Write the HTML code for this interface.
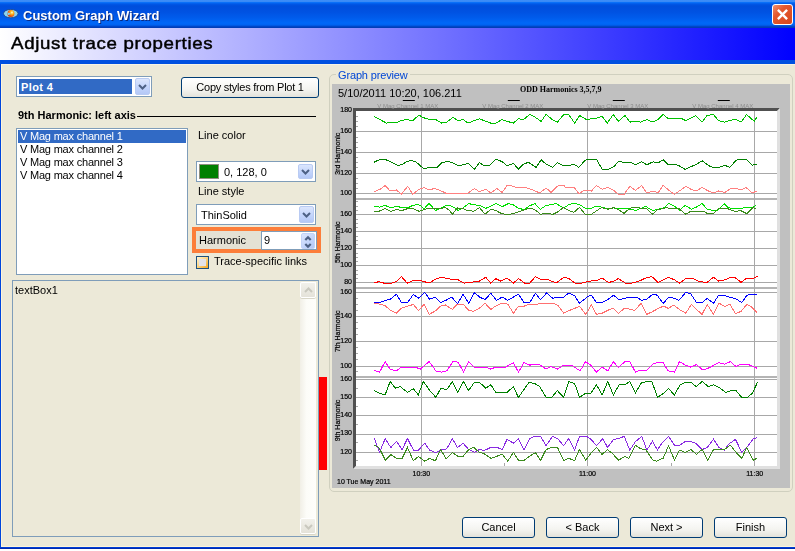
<!DOCTYPE html>
<html><head><meta charset="utf-8"><style>
html,body{margin:0;padding:0;width:795px;height:551px;overflow:hidden;background:#fff}
*{box-sizing:border-box}
.a{position:absolute}
body{font-family:"Liberation Sans",sans-serif;font-size:11px;color:#000;position:relative}
.lbl,.btn,svg{will-change:transform}
.btn{position:absolute;border:1px solid #003C74;border-radius:3px;background:linear-gradient(#FFFFFF,#F4F4F0 60%,#E3E2DA);text-align:center;line-height:19px;font-size:11px;}
.cmb{position:absolute;border:1px solid #7F9DB9;background:#fff}
.dd{position:absolute;width:15px;border:1px solid #B9CBF3;border-radius:2px;background:linear-gradient(#DCE6FD,#C1D3FB 60%,#B4C8F6)}
.dd svg{position:absolute;left:2px;top:5px}
.lbl{position:absolute;white-space:nowrap;font-size:11px;line-height:13px}
</style></head><body>
<!-- window background -->
<div class="a" style="left:0;top:0;width:795px;height:549px;background:#ECE9D8"></div>
<!-- left border -->
<div class="a" style="left:0;top:0;width:1px;height:549px;background:#0046DC"></div>
<div class="a" style="left:1px;top:64px;width:1px;height:483px;background:#FEF5DA"></div>
<!-- bottom border -->
<div class="a" style="left:1px;top:546px;width:794px;height:1px;background:#FEF5DA"></div>
<div class="a" style="left:0;top:547px;width:795px;height:2px;background:linear-gradient(#0048E8,#00209C)"></div>

<!-- title bar -->
<div class="a" style="left:0;top:0;width:795px;height:28px;background:linear-gradient(#3D8EF8 0px,#3A8AF6 1.5px,#0A70F8 2.5px,#0058E8 4px,#004EDC 6px,#0052E2 12px,#005CEC 18px,#0068F8 23px,#0062F0 25px,#0046C8 26.5px,#003AB0 28px)"></div>
<svg class="a" style="left:3px;top:9px" width="16" height="10" viewBox="0 0 16 10">
 <defs><radialGradient id="ball" cx="0.65" cy="0.35" r="0.7"><stop offset="0" stop-color="#FFFFF0"/><stop offset="0.3" stop-color="#FFC020"/><stop offset="0.7" stop-color="#F06010"/><stop offset="1" stop-color="#D03008"/></radialGradient></defs>
 <ellipse cx="7.8" cy="4.6" rx="7.3" ry="4.2" fill="#8ED4F0" stroke="#204A8C" stroke-width="0.9"/>
 <circle cx="7.9" cy="4.6" r="3.5" fill="url(#ball)"/>
 <path d="M4.2 3.2L8 4.8L5 6.2Z" fill="#7FD8F0"/>
</svg>
<div class="lbl" style="left:23px;top:8px;font-weight:bold;font-size:13px;line-height:16px;color:#fff;text-shadow:1px 1px 0 #0A2A80">Custom Graph Wizard</div>
<div class="a" style="left:772px;top:4px;width:21px;height:21px;border:1px solid #fff;border-radius:3px;background:linear-gradient(135deg,#F29070 0%,#E4582E 35%,#D8461C 100%)">
 <svg class="a" style="left:4px;top:4px" width="11" height="11" viewBox="0 0 11 11"><path d="M0.9 0.9L10.1 10.1M10.1 0.9L0.9 10.1" stroke="#fff" stroke-width="2.4"/></svg>
</div>

<!-- header band -->
<div class="a" style="left:0;top:28px;width:795px;height:32px;background:linear-gradient(90deg,#FFFFFF,#0000FF)"></div>
<div class="a" style="left:0;top:60px;width:795px;height:4px;background:#0050E0"></div>
<div class="a" style="left:1px;top:64px;width:794px;height:1px;background:#F8F4E4"></div>
<div class="lbl" style="left:11px;top:34px;font-size:17px;line-height:20px;letter-spacing:0.6px;transform:scaleX(1.1);transform-origin:0 0;-webkit-text-stroke:0.45px #000">Adjust trace properties</div>

<!-- Plot combo -->
<div class="cmb" style="left:16px;top:76px;width:136px;height:21px;">
  <div class="a" style="left:2px;top:2px;width:113px;height:15px;background:#316AC5;color:#fff;font-weight:bold;font-size:11px;line-height:17px;padding-left:2px;letter-spacing:0.4px">Plot 4</div>
  <div class="dd" style="left:118px;top:1px;height:17px"><svg width="9" height="7" viewBox="0 0 9 7" style="top:5px"><path d="M1 1L4.5 4.5L8 1" stroke="#4D6185" stroke-width="2" fill="none"/></svg></div>
</div>
<div class="btn" style="left:181px;top:77px;width:138px;height:21px;letter-spacing:-0.25px">Copy styles from Plot 1</div>

<div class="lbl" style="left:18px;top:109px;font-weight:bold">9th Harmonic: left axis</div>
<div class="a" style="left:137px;top:116px;width:179px;height:1px;background:#000"></div>

<!-- listbox -->
<div class="cmb" style="left:16px;top:128px;width:172px;height:147px;">
  <div class="a" style="left:1px;top:1px;width:168px;height:13px;background:#316AC5"></div>
  <div class="lbl" style="left:3px;top:1px;color:#fff;letter-spacing:-0.2px">V Mag max channel 1</div>
  <div class="lbl" style="left:3px;top:14px;letter-spacing:-0.2px">V Mag max channel 2</div>
  <div class="lbl" style="left:3px;top:27px;letter-spacing:-0.2px">V Mag max channel 3</div>
  <div class="lbl" style="left:3px;top:40px;letter-spacing:-0.2px">V Mag max channel 4</div>
</div>

<div class="lbl" style="left:198px;top:129px">Line color</div>
<div class="cmb" style="left:196px;top:161px;width:120px;height:21px;">
  <div class="a" style="left:2px;top:2px;width:20px;height:15px;border:1px solid #8F8F80;background:#008000"></div>
  <div class="lbl" style="left:27px;top:4px">0, 128, 0</div>
  <div class="dd" style="left:101px;top:2px;height:15px"><svg width="9" height="7" viewBox="0 0 9 7" style="top:4px"><path d="M1 1L4.5 4.5L8 1" stroke="#4D6185" stroke-width="2" fill="none"/></svg></div>
</div>
<div class="lbl" style="left:198px;top:185px">Line style</div>
<div class="cmb" style="left:196px;top:204px;width:120px;height:21px;">
  <div class="lbl" style="left:4px;top:4px">ThinSolid</div>
  <div class="dd" style="left:102px;top:1px;height:17px"><svg width="9" height="7" viewBox="0 0 9 7" style="top:5px"><path d="M1 1L4.5 4.5L8 1" stroke="#4D6185" stroke-width="2" fill="none"/></svg></div>
</div>
<!-- harmonic -->
<div class="a" style="left:192px;top:227px;width:129px;height:26px;border:4px solid #FC7E3A;background:#E4E1D4"></div>
<div class="lbl" style="left:199px;top:234px">Harmonic</div>
<div class="cmb" style="left:261px;top:231px;width:56px;height:19px;">
  <div class="lbl" style="left:2px;top:2px">9</div>
  <div class="a" style="left:39px;top:1px;width:14px;height:16px;border:1px solid #C3D3F8;border-radius:2px;background:linear-gradient(135deg,#DCE6FD,#C1D3FB 60%,#B4C8F6)">
   <svg class="a" style="left:1px;top:1px" width="10" height="14" viewBox="0 0 10 14"><path d="M2.3 5L5 2.3L7.7 5M2.3 9L5 11.7L7.7 9" stroke="#4D6185" stroke-width="2.2" fill="none"/></svg>
  </div>
</div>
<div class="a" style="left:196px;top:256px;width:13px;height:13px;border:1px solid #1C5180;background:linear-gradient(135deg,#FFF6D8,#FCD88A 45%,#F5A41E)"><div class="a" style="left:2px;top:2px;width:7px;height:7px;background:#E3E3EA"></div></div>
<div class="lbl" style="left:214px;top:255px">Trace-specific links</div>

<!-- textbox -->
<div class="a" style="left:12px;top:280px;width:307px;height:257px;border:1px solid #7F9DB9;background:#ECE9D8"></div>
<div class="lbl" style="left:15px;top:284px">textBox1</div>
<div class="a" style="left:300px;top:282px;width:16px;height:252px;background:linear-gradient(90deg,#F1EFE6,#FCFCF8 40%,#FEFEFB)"></div>
<div class="a" style="left:300px;top:282px;width:16px;height:16px;border:1px solid #FFFFFF;border-radius:2px;background:linear-gradient(#F2F1EB,#E4E2D9);box-shadow:0 1px 0 #D8D6C8"><svg class="a" style="left:3px;top:4px" width="9" height="6" viewBox="0 0 9 6"><path d="M1 5L4.5 1.5L8 5" stroke="#C9C8BE" stroke-width="2" fill="none"/></svg></div>
<div class="a" style="left:300px;top:518px;width:16px;height:16px;border:1px solid #FFFFFF;border-radius:2px;background:linear-gradient(#F2F1EB,#E4E2D9);box-shadow:0 1px 0 #D8D6C8"><svg class="a" style="left:3px;top:5px" width="9" height="6" viewBox="0 0 9 6"><path d="M1 1L4.5 4.5L8 1" stroke="#C9C8BE" stroke-width="2" fill="none"/></svg></div>
<div class="red a" style="left:319px;top:377px;width:8px;height:93px;background:#FF0000"></div>

<!-- group box -->
<div class="a" style="left:329px;top:74px;width:464px;height:418px;border:1px solid #D0D0BF;border-radius:5px"></div>
<div class="lbl" style="left:336px;top:69px;background:#ECE9D8;color:#0046D5;padding:0 2px;letter-spacing:-0.15px">Graph preview</div>
<svg class="a" style="left:0;top:0" width="795" height="551" viewBox="0 0 795 551">
<rect x="332" y="84" width="458" height="404" fill="#C0C0C0"/>
<polygon points="353,108 780,108 777,111 356,111 356,466 353,469" fill="#505050"/>
<polygon points="780,108 780,469 353,469 356,466 777,466 777,111" fill="#E0E0E0"/>
<rect x="356" y="111" width="421" height="355" fill="#FFFFFF"/>
<rect x="356" y="131" width="421" height="1" fill="#A8A8A8"/>
<rect x="356" y="152" width="421" height="1" fill="#A8A8A8"/>
<rect x="356" y="173" width="421" height="1" fill="#A8A8A8"/>
<rect x="356" y="193" width="421" height="1" fill="#A8A8A8"/>
<rect x="356" y="116" width="2" height="1" fill="#A8A8A8"/>
<rect x="356" y="121" width="2" height="1" fill="#A8A8A8"/>
<rect x="356" y="126" width="2" height="1" fill="#A8A8A8"/>
<rect x="356" y="137" width="2" height="1" fill="#A8A8A8"/>
<rect x="356" y="142" width="2" height="1" fill="#A8A8A8"/>
<rect x="356" y="147" width="2" height="1" fill="#A8A8A8"/>
<rect x="356" y="157" width="2" height="1" fill="#A8A8A8"/>
<rect x="356" y="162" width="2" height="1" fill="#A8A8A8"/>
<rect x="356" y="167" width="2" height="1" fill="#A8A8A8"/>
<rect x="356" y="178" width="2" height="1" fill="#A8A8A8"/>
<rect x="356" y="183" width="2" height="1" fill="#A8A8A8"/>
<rect x="356" y="188" width="2" height="1" fill="#A8A8A8"/>
<rect x="356" y="214" width="421" height="1" fill="#A8A8A8"/>
<rect x="356" y="231" width="421" height="1" fill="#A8A8A8"/>
<rect x="356" y="248" width="421" height="1" fill="#A8A8A8"/>
<rect x="356" y="265" width="421" height="1" fill="#A8A8A8"/>
<rect x="356" y="282" width="421" height="1" fill="#A8A8A8"/>
<rect x="356" y="201" width="2" height="1" fill="#A8A8A8"/>
<rect x="356" y="206" width="2" height="1" fill="#A8A8A8"/>
<rect x="356" y="210" width="2" height="1" fill="#A8A8A8"/>
<rect x="356" y="219" width="2" height="1" fill="#A8A8A8"/>
<rect x="356" y="223" width="2" height="1" fill="#A8A8A8"/>
<rect x="356" y="227" width="2" height="1" fill="#A8A8A8"/>
<rect x="356" y="236" width="2" height="1" fill="#A8A8A8"/>
<rect x="356" y="240" width="2" height="1" fill="#A8A8A8"/>
<rect x="356" y="244" width="2" height="1" fill="#A8A8A8"/>
<rect x="356" y="253" width="2" height="1" fill="#A8A8A8"/>
<rect x="356" y="257" width="2" height="1" fill="#A8A8A8"/>
<rect x="356" y="261" width="2" height="1" fill="#A8A8A8"/>
<rect x="356" y="270" width="2" height="1" fill="#A8A8A8"/>
<rect x="356" y="274" width="2" height="1" fill="#A8A8A8"/>
<rect x="356" y="278" width="2" height="1" fill="#A8A8A8"/>
<rect x="356" y="287" width="2" height="1" fill="#A8A8A8"/>
<rect x="356" y="292" width="421" height="1" fill="#A8A8A8"/>
<rect x="356" y="316" width="421" height="1" fill="#A8A8A8"/>
<rect x="356" y="341" width="421" height="1" fill="#A8A8A8"/>
<rect x="356" y="366" width="421" height="1" fill="#A8A8A8"/>
<rect x="356" y="298" width="2" height="1" fill="#A8A8A8"/>
<rect x="356" y="304" width="2" height="1" fill="#A8A8A8"/>
<rect x="356" y="310" width="2" height="1" fill="#A8A8A8"/>
<rect x="356" y="322" width="2" height="1" fill="#A8A8A8"/>
<rect x="356" y="328" width="2" height="1" fill="#A8A8A8"/>
<rect x="356" y="334" width="2" height="1" fill="#A8A8A8"/>
<rect x="356" y="347" width="2" height="1" fill="#A8A8A8"/>
<rect x="356" y="353" width="2" height="1" fill="#A8A8A8"/>
<rect x="356" y="359" width="2" height="1" fill="#A8A8A8"/>
<rect x="356" y="371" width="2" height="1" fill="#A8A8A8"/>
<rect x="356" y="379" width="421" height="1" fill="#A8A8A8"/>
<rect x="356" y="397" width="421" height="1" fill="#A8A8A8"/>
<rect x="356" y="415" width="421" height="1" fill="#A8A8A8"/>
<rect x="356" y="434" width="421" height="1" fill="#A8A8A8"/>
<rect x="356" y="452" width="421" height="1" fill="#A8A8A8"/>
<rect x="356" y="388" width="2" height="1" fill="#A8A8A8"/>
<rect x="356" y="406" width="2" height="1" fill="#A8A8A8"/>
<rect x="356" y="424" width="2" height="1" fill="#A8A8A8"/>
<rect x="356" y="442" width="2" height="1" fill="#A8A8A8"/>
<rect x="356" y="460" width="2" height="1" fill="#A8A8A8"/>
<rect x="356" y="198" width="421" height="2" fill="#B4B4B4"/>
<rect x="356" y="287" width="421" height="2" fill="#B4B4B4"/>
<rect x="356" y="376" width="421" height="2" fill="#B4B4B4"/>
<rect x="421" y="111" width="1" height="355" fill="#A8A8A8"/>
<rect x="587" y="111" width="1" height="355" fill="#A8A8A8"/>
<rect x="754" y="111" width="1" height="355" fill="#A8A8A8"/>
<rect x="504" y="463" width="1" height="3" fill="#A8A8A8"/>
<rect x="671" y="463" width="1" height="3" fill="#A8A8A8"/>
<polyline points="373.8,116.3 380.1,119.6 386.4,123.1 390.1,122.1 397.7,122.1 401.4,120.6 406.5,119.6 412.8,120.6 419.1,115 422.8,117.5 429.1,119.3 435.4,119.3 441.7,123.1 446.7,122.1 453,117.5 458.1,120.6 463.1,119.6 468.1,123.1 474.4,120.6 479.4,118.8 485.7,121.3 490.8,123.1 495.8,123.1 502.1,119.6 507.1,121.3 513.4,123.1 518.4,118.8 523.5,119.6 529.7,114.5 534.8,117 541.1,121.3 546.1,114.5 552.4,119.6 557.4,122.1 563.7,114.5 568.7,114.5 574.6,123.1 579.6,115.5 586.4,119.6 591.4,118.8 596.4,118.1 602.2,116.3 607.3,123.1 613.3,114.5 618.3,121.3 624.9,115.5 629.9,122.1 634.9,121.3 640.5,122.1 646.8,119.6 653.1,122.1 658.1,119.6 663.1,114.5 668.6,118.8 675.7,118.1 680.7,118.1 685.8,120.6 690.8,118.1 695.8,115.5 702.1,122.1 707.1,115.5 713.4,114.5 718.5,120.6 724.7,122.1 731,120.1 736.1,119.6 741.1,122.1 746.6,114.5 754.2,121.3 756.7,117.5" fill="none" stroke="#00C000" stroke-width="1" shape-rendering="crispEdges"/>
<polyline points="373.8,162.3 380.1,159.3 385.1,159.3 391.4,162.3 397.7,165.3 401.4,164.8 406.5,161.8 411.5,160.3 416.5,162.3 424.1,169.1 429.1,167.4 434.2,167.4 436.7,167.9 441.7,162.8 446.7,161.6 451.8,162.3 458.1,165.8 463.1,164.8 468.1,163.3 474.4,169.1 479.4,162.8 484.5,165.8 489.5,165.8 495.8,159.3 502.1,161.6 507.1,165.8 513.4,163.3 518.4,169.1 523.5,164.1 528.5,162.3 536,167.4 541.1,159.8 546.1,164.1 552.4,167.4 557.4,162.8 563.7,165.8 565,165.8 568.8,165.8 573.8,164.1 578.8,167.4 585.1,160.3 588.9,159.3 596.4,159.3 602.2,169.4 607.8,169.4 614.1,166.6 618.3,161.6 624.1,162.3 630.4,162.3 635.4,164.8 641.7,161.6 646.8,164.8 653.1,161.8 658.1,162.8 663.1,159.8 668.1,164.8 673.2,164.1 678.2,165.3 685.3,169.4 690.8,166.6 695.8,164.8 702.1,160.8 708.9,165.8 713.4,167.4 719,167.4 724.7,165.3 729.8,167.4 736.1,160.3 739.8,159.3 746.1,159.3 752.4,165.3 756.7,164.1" fill="none" stroke="#008000" stroke-width="1" shape-rendering="crispEdges"/>
<polyline points="373.8,191.8 380.1,189.2 385.1,185.5 390.1,191 396.4,190 401.4,194.3 407.7,186.2 412.8,194.3 419.1,189.2 424.1,187.5 429.1,190 434.2,188.5 439.2,190 445.5,193 468.1,193 474.4,188.5 479.4,191.8 485.7,189.2 490.8,193 497,188.5 502.1,192.5 507.1,185.5 510.9,185.5 515.9,187.2 524.7,187.2 531,189.2 539.8,193 546.1,188 551.1,192.5 557.4,186.2 563.7,185 565,187 573.8,187 578.8,193.5 585.1,190 591.4,191 596.4,185.5 602.2,189.2 607.8,187.5 613.3,190 618.3,194.3 624.1,194.3 629.9,186.2 635.4,190.5 641.7,185.5 646.8,193 653.1,191 658.1,193 663.1,185.5 668.6,190 674.4,194.3 680.7,190 685.8,186.2 690.8,189.2 696.3,191 702.1,187.5 708.4,191 713.4,193 718.5,191 724.7,192.5 731,188.5 736.1,188.5 741.1,190 746.1,187.5 752.4,193 756.7,191" fill="none" stroke="#FF8080" stroke-width="1" shape-rendering="crispEdges"/>
<polyline points="374.4,206.3 380.1,207.1 385.1,205.4 390.8,207.9 396.4,206.3 402.1,207.6 407.7,207.9 412.8,205.4 417.8,204.6 420.9,206.1 424.1,208.8 429.1,203.3 435.4,210.5 441.7,207.6 446.1,205.4 449.9,205.4 454.3,207.6 458.1,210.5 463.1,207.9 468.7,203.5 472.5,204.6 480.1,205.4 485.8,208.3 490.8,206.1 496.4,203.5 502.1,206.7 508.4,203.5 512.8,204.6 518.5,208.3 524.1,209.6 529.2,206.1 534.8,203.5 540.5,209.2 545.5,205.8 550.5,204.6 556.2,203.5 561.2,206.7 563.8,207.9 568.8,204.6 572.6,203.5 576.4,203.8 580.8,205.4 585.2,208.3 591.4,208.3 595.8,206.3 600.3,206.7 602.8,207.6 607.8,208.6 612.8,207.9 617.9,208.6 626.7,208.6 630.4,209.2 635.5,210.5 640.5,208.6 645.5,206.3 649.3,208.6 653.1,210.5 663.8,207.9 668.8,203.3 675.1,206.7 679.5,210.1 685.2,205.4 691.4,209.2 697.1,206.7 702.1,203.5 707.2,209.2 712.8,210.5 717.9,210.1 724.2,203.5 728.6,207.9 733,208.3 740.5,208.3 745.5,207.6 751.8,207.6 756.2,205.4" fill="none" stroke="#00E000" stroke-width="1" shape-rendering="crispEdges"/>
<polyline points="374.4,211.3 379.4,211.1 385.1,208.6 390.8,211.3 396.4,209.6 402.1,210.5 407.7,208.6 412.8,208.6 419.1,211.3 424.1,209.6 427.9,208.6 432.9,208.6 440.4,208.6 445.5,207.6 449.2,210.1 452.4,214.2 457.4,207.9 463.1,208.6 466.9,210.5 469.4,210.5 473.8,211.3 479.5,207.6 485.1,214.2 490.8,209.2 496.4,210.8 501.5,213.6 507.8,214.6 515.3,213 522.9,210.5 529.2,208.3 534.2,209.2 540.5,214.2 545.5,213.6 553.1,214.2 558.1,211.7 563.1,207.6 568.8,210.5 573.8,212.4 579.5,207.3 585.2,214.2 591.4,214.2 596.5,210.8 601.5,207.6 607.8,209.2 614.1,207.6 619.1,210.1 624.2,213.4 629.2,208.6 633,207.3 638,207.3 641.8,208.6 646.8,208.6 652.5,214.2 657.5,209.8 665.7,207.9 675.1,208.3 678.9,208.6 685.8,214.2 690.8,211.3 703.4,211.3 707.2,213.4 713.5,213.4 719.1,208.3 726.7,208.3 735.5,211.7 740.5,210.5 746.8,213.6 753.1,207.6 756.2,209.2" fill="none" stroke="#3A8C1A" stroke-width="1" shape-rendering="crispEdges"/>
<polyline points="373.8,283.1 378.8,281.6 383.8,283.1 391.4,283.1 396.4,281.6 401.4,276.6 407.2,283.1 412.8,280.6 420.3,280.6 424.1,281.6 429.1,283.1 435.4,279.1 441.7,277.3 450.5,279.1 456.8,279.1 464.3,283.1 470.6,282.4 479.4,281.1 485.7,277.3 490.8,283.1 495.8,278.6 500.8,281.1 507.1,278.1 513.4,283.1 518.4,278.6 524.7,283.1 529.7,283.1 535.5,276.6 541.1,279.8 548.6,279.8 556.2,283.1 563.7,277.3 565,277.3 568.8,278.6 575.1,283.1 581.4,283.1 587.6,281.6 592.7,280.6 596.4,280.6 602.2,278.1 608.3,282.4 612.8,281.6 618.3,278.6 625.4,283.1 631.7,283.1 638,281.6 645.5,278.1 651.8,276.6 658.1,282.4 663.1,279.8 668.6,277.3 674.4,279.8 679.5,283.1 685.8,278.6 692,278.1 699.6,281.6 707.1,282.4 713.4,277.3 718.5,281.1 724.7,279.8 731,277.3 736.1,278.1 741.1,282.4 746.6,278.1 754.2,278.1 757.5,276.1" fill="none" stroke="#FF0000" stroke-width="1" shape-rendering="crispEdges"/>
<polyline points="374.4,302.5 380.1,302.5 385.1,300.6 390.1,299.3 396.4,294.3 401.4,302.5 407.7,302.5 413.4,294.3 418.4,298.3 424.7,292.4 429.7,299.3 434.8,297.1 440.4,302.5 445.5,300.6 451.8,297.1 457.4,303.7 463.1,294.3 468.7,303.1 474.4,292.8 480.1,297.4 485.1,299.6 490.8,293.3 496.4,300.3 502.1,297.1 507.8,300.3 512.8,297.4 518.5,294.3 524.1,302.5 529.8,302.5 535.4,293.3 540.5,299.6 546.8,292.8 553.1,298.7 555.6,297.1 563.7,297.1 568.8,293 574.5,295.5 579.5,303.3 585.2,298.7 587.7,296.6 591.4,295.3 596.5,302.5 602.1,302.5 607.2,299.9 613.5,295.3 619.1,299.6 624.2,298.7 627.9,297.1 636.1,297.1 641.8,300.3 646.8,299.1 653.1,294 657.5,295.3 660,299.3 663.1,303.3 668.8,297.4 673.8,298.1 678.9,300.3 685.8,292.4 690.8,294 696.5,302.5 702.1,302.5 707.2,298.3 713.5,303.3 718.5,295.5 724.8,295.5 730.4,297.4 735.5,298.7 741.8,302.5 746.8,295.5 750.6,294 756.9,294" fill="none" stroke="#0000FF" stroke-width="1" shape-rendering="crispEdges"/>
<polyline points="374.4,303.1 379.4,304.1 385.1,305.6 390.1,310 396.4,313.2 401.4,308.1 407.7,306.2 413.4,304.4 418.4,310.6 424.1,304.4 429.1,314.4 435.4,310.9 440.4,306.2 445.5,305 452.4,309.4 457.4,304.1 463.1,304.1 468.7,310.4 473.8,311.3 479.5,308.1 485.1,303.3 490.8,309.4 496.4,305.6 502.1,303.1 507.8,304.1 513.4,313.2 518.5,306.2 524.1,306.2 529.2,304.1 534.8,305 540.5,303.1 553.1,303.1 558.1,305.6 563.7,313.2 568.8,310.6 573.8,308.8 579.5,306.2 585.8,314.4 591.4,305 596.5,314.4 602.1,313.2 607.2,310.6 612.8,308.1 618.5,313.2 624.8,308.1 630.4,309.4 634.8,310.4 641.1,303.3 646.8,314.4 653.1,311.3 660,307.5 663.8,306.2 668.2,308.4 673.8,305 680.1,310 685.8,313.2 691.4,304.4 697.1,310 702.1,314.4 707.2,304.4 713.5,314.4 719.1,303.1 724.8,306.6 729.8,304.1 735.5,313.8 741.1,311.3 746.8,304.4 751.8,307.1 756.9,312.5" fill="none" stroke="#FF7070" stroke-width="1" shape-rendering="crispEdges"/>
<polyline points="373.8,370.1 379.6,372.1 385.1,361.6 390.1,369.1 396.4,370.9 401.4,367.1 415.3,367.1 420.3,369.1 429.1,361.6 435.9,370.9 441.7,372.1 446.7,370.9 453,361.6 458.1,362.1 463.6,372.1 468.6,361.6 474.4,367.1 485.7,367.1 490.8,369.1 495.8,367.1 505.8,367.1 513.4,362.6 518.4,372.1 524,362.6 529.7,365.1 538.6,364.1 546.1,369.1 551.1,366.6 557.4,369.1 563.7,365.1 565,365.1 571.3,365.1 580.1,370.9 585.6,361.6 590.7,365.1 596.4,372.1 602.2,367.1 607.8,370.9 613.3,361.6 618.3,367.6 624.9,361.6 629.9,361.6 635.4,372.1 640.5,370.1 646.8,370.1 653.1,364.1 656.8,362.6 663.1,362.6 668.1,370.9 674.4,372.1 679.5,361.6 685.3,365.1 690.8,367.1 696.3,364.6 702.9,370.1 709.7,367.6 718.5,362.6 724.7,364.1 730.5,361.6 736.1,366.6 741.1,364.1 747.4,364.1 754.2,367.1 757.5,368.4" fill="none" stroke="#FF00FF" stroke-width="1" shape-rendering="crispEdges"/>
<polyline points="373.8,390.6 380.1,393.6 385.1,394.9 390.1,381.5 395.2,388.1 400.2,386.6 407.7,392.4 413.3,388.6 418.3,394.9 423.3,381.5 429.9,390.6 435.9,397.4 440.9,388.1 446.7,389.8 452.5,381.5 457.5,392.4 463.6,381.5 468.6,390.6 474.4,382.3 479.4,382.3 485.7,388.1 490.8,384.8 495.8,392.4 507.1,392.4 513.4,386.6 518.4,397.4 529,382.3 534.8,383.5 539.8,386.6 546.1,397.4 551.6,397.4 557.4,390.6 563.7,397.4 568.7,381.5 574.6,383.5 579.6,397.4 585.1,393.6 590.7,393.6 596.4,384.8 602.2,394.9 607.8,381.5 613.3,394.9 619.1,384.8 624.9,384.8 629.9,381.5 635.4,393.1 641.7,382.3 651.8,381.5 657.6,397.4 663.1,393.6 668.6,388.6 674.4,394.9 680.2,384.8 685.8,382.3 690.8,382.3 696.3,386.6 702.1,381.5 708.4,386.6 713.4,384.8 719,387.3 725.5,392.4 731,390.6 736.1,390.6 741.6,397.4 747.4,397.4 752.4,393.1 757.5,382.3" fill="none" stroke="#008000" stroke-width="1" shape-rendering="crispEdges"/>
<polyline points="374.4,438.2 376.3,443.8 379.8,452.6 381.9,446.4 385.3,438.6 390.8,447.6 396.4,441.3 402.1,449.5 407.5,438.6 413.4,450.1 418.4,450.1 424.7,443.2 429.7,450.1 435.4,452.6 441.1,450.1 446.7,448.9 452.4,438.6 457.4,447.6 463.1,443.2 468.7,449.5 474.4,452.4 479.5,449.5 484.5,450.4 490.8,447.4 497.1,447.4 502.1,449.5 507.1,439.4 513.4,443.2 518.5,438.6 524.1,450.1 529.8,438.6 534.8,436.3 540.5,436.3 546.1,445.7 552.4,436.3 558.1,439.1 563.7,445.7 568.6,438.6 574.5,450.1 579.5,436.3 586.4,436.3 590.8,439.1 596.5,445.7 602.8,438.6 607.5,447.4 613.5,439.4 618.5,438.6 624.2,436.3 629.8,450.1 635.5,441.6 641.8,436.3 646.8,450.1 652.5,441.3 657.5,450.1 660,445.7 663.1,441.9 668.6,436.3 674.5,445.3 679.5,445.3 685.2,441.6 691.4,441.6 696.5,443.8 702.1,449.5 707.2,447.6 713.5,439.1 718.5,447 724.2,450.1 729.2,443.8 735.5,439.4 741.8,452.4 746.8,447.6 753.1,439.1 756.9,437.5" fill="none" stroke="#8A2BE2" stroke-width="1" shape-rendering="crispEdges"/>
<polyline points="374.4,445.3 378.2,447 380.7,450.8 385.3,460.2 390.8,454.5 396.4,458.3 402.1,458.3 407.5,447.6 413.4,460.8 418.4,456.4 424.7,461.2 429.7,458.3 435.4,460.8 440.7,449.5 446.1,458.7 452.4,452.6 458.1,456.4 463.1,456.4 468.7,449.5 473.8,447.4 478.8,452 484.5,453.9 490.8,458.3 497.1,456.2 502.1,454.2 507.8,461.2 513.4,452.4 518.5,460.2 524.1,460.2 529.8,456.2 535.4,452.6 540.5,460.4 546.1,449.5 551.8,447.4 557.5,447.4 563.7,460.8 568.8,458.3 574.5,460.8 579.5,449.5 585.8,460.2 591.4,452.6 596.5,447.4 602.1,454.5 607.5,449.5 612.8,453.9 618.5,460.2 624.8,456.4 628.9,458.3 635.5,445.3 640.5,448.6 646.2,450.1 652.5,459.9 656.9,461.2 660,459.6 663.1,458.3 668.6,445.7 674.5,460.2 679.5,450.1 685.2,452.4 690.8,449.5 696.5,454.2 702.1,449.5 707.8,460.2 713.5,449.5 724.2,449.5 730.4,445.3 736.1,452.4 741.8,458.3 746.8,447.4 753.1,460.2 756.9,458.3" fill="none" stroke="#3C8C1E" stroke-width="1" shape-rendering="crispEdges"/>
<text x="352" y="112.4" text-anchor="end" font-size="7" font-family="Liberation Sans" fill="#000" stroke="#000" stroke-width="0.2">180</text>
<text x="352" y="133.3" text-anchor="end" font-size="7" font-family="Liberation Sans" fill="#000" stroke="#000" stroke-width="0.2">160</text>
<text x="352" y="153.9" text-anchor="end" font-size="7" font-family="Liberation Sans" fill="#000" stroke="#000" stroke-width="0.2">140</text>
<text x="352" y="174.5" text-anchor="end" font-size="7" font-family="Liberation Sans" fill="#000" stroke="#000" stroke-width="0.2">120</text>
<text x="352" y="195.1" text-anchor="end" font-size="7" font-family="Liberation Sans" fill="#000" stroke="#000" stroke-width="0.2">100</text>
<text x="352" y="216.2" text-anchor="end" font-size="7" font-family="Liberation Sans" fill="#000" stroke="#000" stroke-width="0.2">160</text>
<text x="352" y="233.3" text-anchor="end" font-size="7" font-family="Liberation Sans" fill="#000" stroke="#000" stroke-width="0.2">140</text>
<text x="352" y="250.3" text-anchor="end" font-size="7" font-family="Liberation Sans" fill="#000" stroke="#000" stroke-width="0.2">120</text>
<text x="352" y="267.3" text-anchor="end" font-size="7" font-family="Liberation Sans" fill="#000" stroke="#000" stroke-width="0.2">100</text>
<text x="352" y="284.1" text-anchor="end" font-size="7" font-family="Liberation Sans" fill="#000" stroke="#000" stroke-width="0.2">80</text>
<text x="352" y="294.2" text-anchor="end" font-size="7" font-family="Liberation Sans" fill="#000" stroke="#000" stroke-width="0.2">160</text>
<text x="352" y="318.3" text-anchor="end" font-size="7" font-family="Liberation Sans" fill="#000" stroke="#000" stroke-width="0.2">140</text>
<text x="352" y="343.2" text-anchor="end" font-size="7" font-family="Liberation Sans" fill="#000" stroke="#000" stroke-width="0.2">120</text>
<text x="352" y="368" text-anchor="end" font-size="7" font-family="Liberation Sans" fill="#000" stroke="#000" stroke-width="0.2">100</text>
<text x="352" y="381.2" text-anchor="end" font-size="7" font-family="Liberation Sans" fill="#000" stroke="#000" stroke-width="0.2">160</text>
<text x="352" y="399.1" text-anchor="end" font-size="7" font-family="Liberation Sans" fill="#000" stroke="#000" stroke-width="0.2">150</text>
<text x="352" y="417.1" text-anchor="end" font-size="7" font-family="Liberation Sans" fill="#000" stroke="#000" stroke-width="0.2">140</text>
<text x="352" y="435.4" text-anchor="end" font-size="7" font-family="Liberation Sans" fill="#000" stroke="#000" stroke-width="0.2">130</text>
<text x="352" y="454.1" text-anchor="end" font-size="7" font-family="Liberation Sans" fill="#000" stroke="#000" stroke-width="0.2">120</text>
<text transform="translate(340,153.8) rotate(-90)" text-anchor="middle" font-size="7" font-family="Liberation Sans" fill="#000" stroke="#000" stroke-width="0.2">3rd Harmonic</text>
<text transform="translate(340,242.2) rotate(-90)" text-anchor="middle" font-size="7" font-family="Liberation Sans" fill="#000" stroke="#000" stroke-width="0.2">5th Harmonic</text>
<text transform="translate(340,331.3) rotate(-90)" text-anchor="middle" font-size="7" font-family="Liberation Sans" fill="#000" stroke="#000" stroke-width="0.2">7th Harmonic</text>
<text transform="translate(340,420.5) rotate(-90)" text-anchor="middle" font-size="7" font-family="Liberation Sans" fill="#000" stroke="#000" stroke-width="0.2">9th Harmonic</text>
<text x="421.3" y="476" text-anchor="middle" font-size="7" font-family="Liberation Sans" fill="#000" stroke="#000" stroke-width="0.2">10:30</text>
<text x="587.5" y="476" text-anchor="middle" font-size="7" font-family="Liberation Sans" fill="#000" stroke="#000" stroke-width="0.2">11:00</text>
<text x="754.7" y="476" text-anchor="middle" font-size="7" font-family="Liberation Sans" fill="#000" stroke="#000" stroke-width="0.2">11:30</text>
<text x="337" y="484" font-size="7" font-family="Liberation Sans" fill="#000" stroke="#000" stroke-width="0.2">10 Tue May 2011</text>
<text x="338" y="96.5" font-size="11" font-family="Liberation Sans" fill="#000">5/10/2011 10:20, 106.211</text>
<text x="520" y="92" font-size="8" font-weight="bold" font-family="Liberation Serif" fill="#000">ODD Harmonics 3,5,7,9</text>
<rect x="402.8" y="100" width="12" height="1" fill="#000"/>
<text x="407.8" y="107.5" text-anchor="middle" font-size="6" font-family="Liberation Sans" fill="#8C8C8C">V Mag Channel 1 MAX</text>
<rect x="507.8" y="100" width="12" height="1" fill="#000"/>
<text x="512.8" y="107.5" text-anchor="middle" font-size="6" font-family="Liberation Sans" fill="#8C8C8C">V Mag Channel 2 MAX</text>
<rect x="612.8" y="100" width="12" height="1" fill="#000"/>
<text x="617.8" y="107.5" text-anchor="middle" font-size="6" font-family="Liberation Sans" fill="#8C8C8C">V Mag Channel 3 MAX</text>
<rect x="717.8" y="100" width="12" height="1" fill="#000"/>
<text x="722.8" y="107.5" text-anchor="middle" font-size="6" font-family="Liberation Sans" fill="#8C8C8C">V Mag Channel 4 MAX</text>
</svg>

<!-- buttons -->
<div class="btn" style="left:462px;top:517px;width:73px;height:21px;">Cancel</div>
<div class="btn" style="left:546px;top:517px;width:73px;height:21px;">&lt; Back</div>
<div class="btn" style="left:630px;top:517px;width:73px;height:21px;">Next &gt;</div>
<div class="btn" style="left:714px;top:517px;width:73px;height:21px;">Finish</div>
</body></html>
